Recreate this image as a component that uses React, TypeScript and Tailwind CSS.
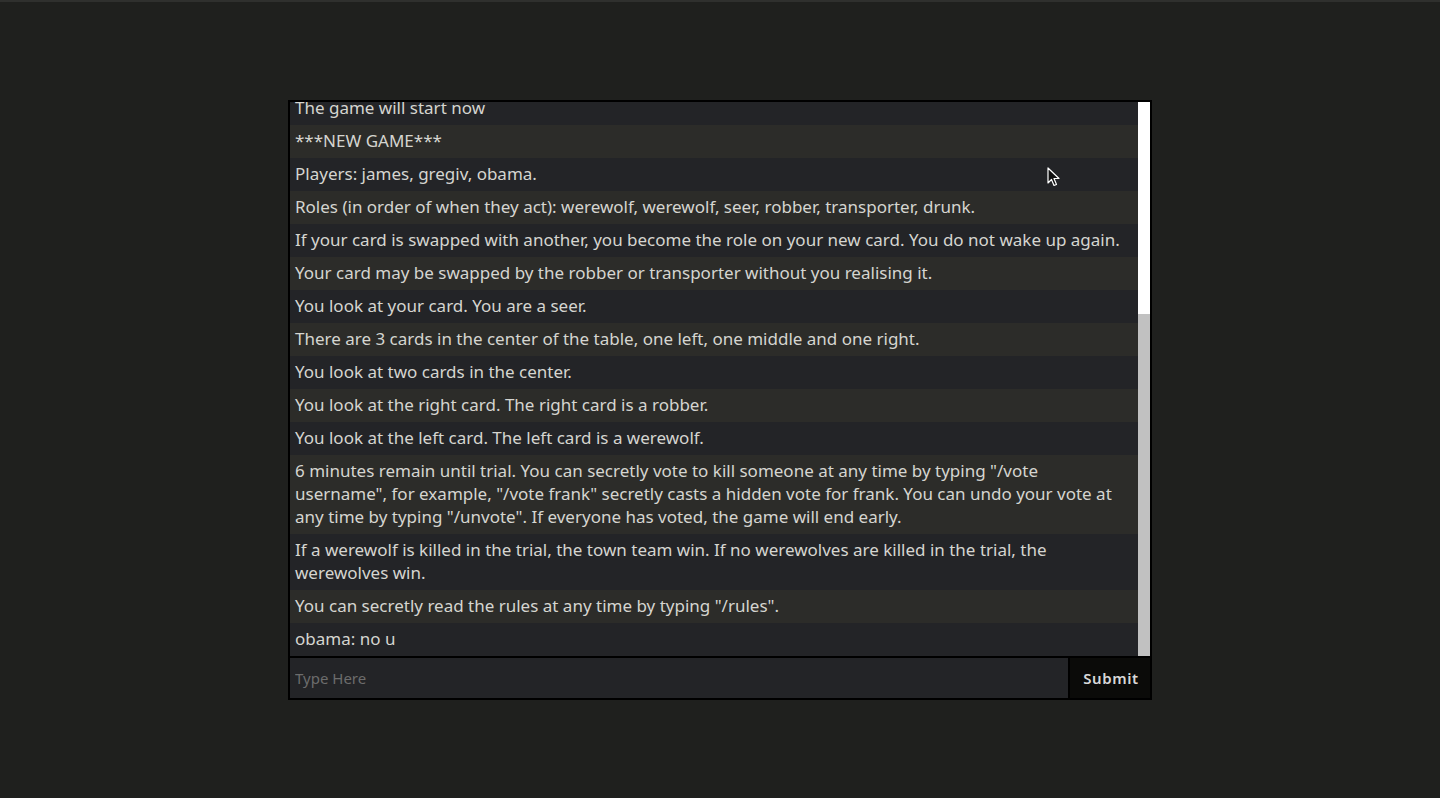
import { useEffect, useRef } from 'react';

const messages = [
  'The game will start now',
  '***NEW GAME***',
  'Players: james, gregiv, obama.',
  'Roles (in order of when they act): werewolf, werewolf, seer, robber, transporter, drunk.',
  'If your card is swapped with another, you become the role on your new card. You do not wake up again.',
  'Your card may be swapped by the robber or transporter without you realising it.',
  'You look at your card. You are a seer.',
  'There are 3 cards in the center of the table, one left, one middle and one right.',
  'You look at two cards in the center.',
  'You look at the right card. The right card is a robber.',
  'You look at the left card. The left card is a werewolf.',
  '6 minutes remain until trial. You can secretly vote to kill someone at any time by typing "/vote username", for example, "/vote frank" secretly casts a hidden vote for frank. You can undo your vote at any time by typing "/unvote". If everyone has voted, the game will end early.',
  'If a werewolf is killed in the trial, the town team win. If no werewolves are killed in the trial, the werewolves win.',
  'You can secretly read the rules at any time by typing "/rules".',
  'obama: no u',
];

const font = { fontFamily: "'Noto Sans', 'Open Sans', sans-serif" };

export default function App() {
  const inputRef = useRef<HTMLInputElement>(null);

  useEffect(() => {
    inputRef.current?.focus();
  }, []);

  return (
    <div
      className="relative min-h-screen border-t-2 border-[#2f302e] bg-[#1f201e] pt-[98px]"
      style={font}
    >
      <div className="mx-auto w-[864px] border-2 border-black">
        {/* chat log, pinned to the bottom like a scrolled-down list */}
        <div className="flex h-[554px]">
          <div className="flex min-w-0 flex-1 flex-col justify-end overflow-hidden">
            {messages.map((m, i) => (
              <div
                key={i}
                className={`shrink-0 px-[5px] pt-[4px] pb-[6px] text-[17px] leading-[23px] text-[#d5d5d0] ${
                  (messages.length - 1 - i) % 2 === 0 ? 'bg-[#232427]' : 'bg-[#2c2c29]'
                }`}
              >
                {m}
              </div>
            ))}
          </div>
          <div className="flex w-[12px] flex-col justify-end bg-white">
            <div className="h-[342px] bg-[#c1c1c1]" />
          </div>
        </div>
        <form
          className="flex h-[42px] border-t-2 border-black"
          onSubmit={(e) => e.preventDefault()}
        >
          <input
            ref={inputRef}
            placeholder="Type Here"
            className="min-w-0 flex-1 bg-[#232427] px-[5px] text-[15px] text-[#d5d5d0] caret-[#d5d5d0] outline-none placeholder:text-[#6c6c6c]"
            style={font}
          />
          <button
            type="submit"
            className="w-[82px] border-l-2 border-black bg-[#0b0b09] pl-[2px] text-[15px] font-semibold tracking-[0.6px] text-[#d8d8d8]"
            style={font}
          >
            Submit
          </button>
        </form>
      </div>

      <svg
        className="pointer-events-none absolute left-[1047px] top-[165px]"
        width="14"
        height="20"
        viewBox="0 0 14 20"
      >
        <path
          d="M1 1 L1 16 L4.5 12.5 L7 18.5 L9.5 17.5 L7 11.5 L12 11.5 Z"
          fill="#111"
          stroke="#fff"
          strokeWidth="1.2"
          strokeLinejoin="round"
        />
      </svg>
    </div>
  );
}
